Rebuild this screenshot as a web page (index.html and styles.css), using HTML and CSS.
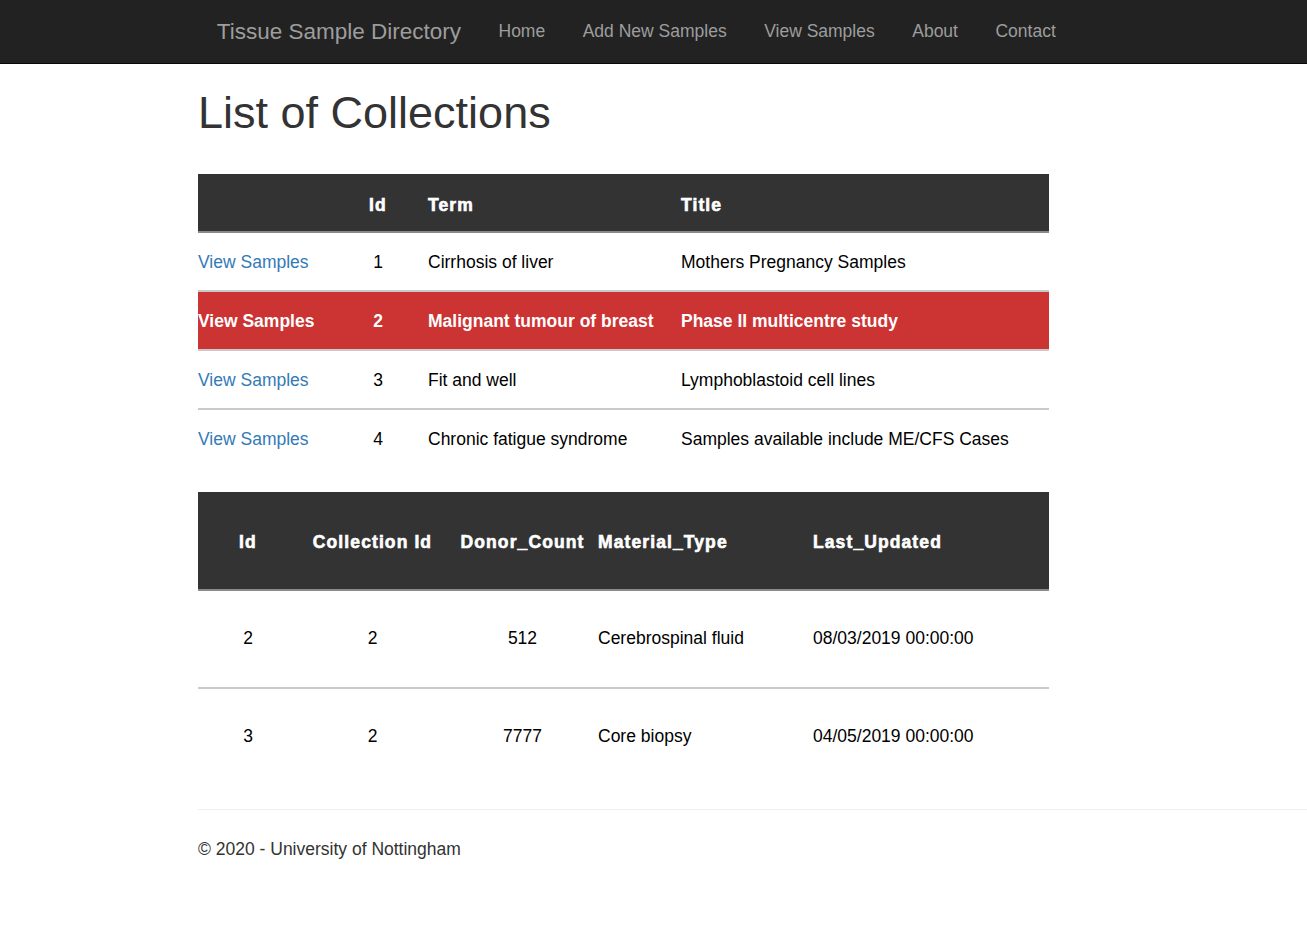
FILE: index.html
```html
<!DOCTYPE html>
<html lang="en">
<head>
<meta charset="utf-8">
<title>List of Collections - Tissue Sample Directory</title>
<link rel="stylesheet" href="styles.css">
</head>
<body>
<nav class="navbar">
  <a class="brand" href="#">Tissue Sample Directory</a>
  <ul class="nav">
    <li><a href="#">Home</a></li>
    <li><a href="#">Add New Samples</a></li>
    <li><a href="#">View Samples</a></li>
    <li><a href="#">About</a></li>
    <li><a href="#">Contact</a></li>
  </ul>
</nav>
<main class="body-content">
  <h1 class="title">List of Collections</h1>

  <table class="grid collections">
    <colgroup>
      <col class="c-link"><col class="c-id"><col class="c-term"><col class="c-title">
    </colgroup>
    <thead>
      <tr><th></th><th class="center">Id</th><th class="pad">Term</th><th class="pad">Title</th></tr>
    </thead>
    <tbody>
      <tr><td><a href="#">View Samples</a></td><td class="center">1</td><td class="pad">Cirrhosis of liver</td><td class="pad">Mothers Pregnancy Samples</td></tr>
      <tr class="selected"><td><a href="#">View Samples</a></td><td class="center">2</td><td class="pad">Malignant tumour of breast</td><td class="pad">Phase II multicentre study</td></tr>
      <tr><td><a href="#">View Samples</a></td><td class="center">3</td><td class="pad">Fit and well</td><td class="pad">Lymphoblastoid cell lines</td></tr>
      <tr><td><a href="#">View Samples</a></td><td class="center">4</td><td class="pad">Chronic fatigue syndrome</td><td class="pad">Samples available include ME/CFS Cases</td></tr>
    </tbody>
  </table>

  <table class="grid samples">
    <colgroup>
      <col class="s-id"><col class="s-cid"><col class="s-count"><col class="s-type"><col class="s-date">
    </colgroup>
    <thead>
      <tr><th class="center">Id</th><th class="center">Collection Id</th><th class="center">Donor_Count</th><th>Material_Type</th><th>Last_Updated</th></tr>
    </thead>
    <tbody>
      <tr><td class="center">2</td><td class="center">2</td><td class="center">512</td><td>Cerebrospinal fluid</td><td>08/03/2019 00:00:00</td></tr>
      <tr><td class="center">3</td><td class="center">2</td><td class="center">7777</td><td>Core biopsy</td><td>04/05/2019 00:00:00</td></tr>
    </tbody>
  </table>

  <hr class="rule">
  <footer class="footer">
    <p>&copy; 2020 - University of Nottingham</p>
  </footer>
</main>
</body>
</html>
```

FILE: styles.css
```css
html, body {
  margin: 0;
  padding: 0;
}

body {
  font-family: "Liberation Sans", Arial, Helvetica, sans-serif;
  font-size: 17.5px;
  line-height: 25px;
  color: #333;
  background: #fff;
}

a {
  color: #337ab7;
  text-decoration: none;
}

/* Navbar */
.navbar {
  display: flex;
  align-items: flex-start;
  min-height: 63px;
  box-sizing: border-box;
  background: #222;
  border-bottom: 1px solid #080808;
  padding-left: 198px;
}

.brand {
  display: block;
  padding: 18.75px 18.75px;
  font-size: 22.5px;
  line-height: 25px;
  color: #9d9d9d;
}

.nav {
  display: flex;
  list-style: none;
  margin: 0;
  padding: 0;
}

.nav a {
  display: block;
  padding: 18.75px 18.75px;
  line-height: 25px;
  color: #9d9d9d;
}

/* Content */
.body-content {
  padding-left: 198px;
}

.title {
  margin: 24px 0 37px;
  font-size: 45px;
  line-height: 49.5px;
  font-weight: 500;
  color: #333;
}

.grid {
  width: 851px;
  border-collapse: collapse;
  table-layout: fixed;
  margin-bottom: 25px;
  color: #000;
}

.grid th {
  background: #333;
  color: #fff;
  font-weight: 700;
  letter-spacing: 1.1px;
  -webkit-text-stroke: 0.6px #fff;
  text-align: left;
  border-bottom: 2px solid #8a8a8a;
  padding: 0;
}

.grid td {
  padding: 0;
  border-top: 2px solid #cacaca;
  white-space: nowrap;
}

.grid tbody tr:first-child td {
  border-top: none;
}

.grid .center {
  text-align: center;
}

.grid .pad {
  padding-left: 20px;
}

/* Collections table */
.collections th {
  height: 58px;
  box-sizing: border-box;
  padding-top: 5px;
}

.collections td {
  padding-top: 17px;
  padding-bottom: 15px;
}

.collections .c-link { width: 150px; }
.collections .c-id { width: 60px; }
.collections .c-term { width: 253px; }
.collections .c-title { width: 388px; }

.selected td {
  background: #cc3333;
  color: #fff;
  font-weight: 700;
}

.selected a {
  color: #fff;
}

/* Samples table */
.samples {
  margin-bottom: 24px;
}

.samples th {
  padding-top: 38px;
  padding-bottom: 34px;
}

.samples td {
  padding-top: 35px;
  padding-bottom: 36px;
}

.samples .s-id { width: 100px; }
.samples .s-cid { width: 149px; }
.samples .s-count { width: 151px; }
.samples .s-type { width: 215px; }
.samples .s-date { width: 236px; }

/* Footer */
.rule {
  margin: 0;
  border: 0;
  border-top: 1px solid #eee;
}

.footer p {
  margin: 27px 0 20px;
  color: #333;
}
```
